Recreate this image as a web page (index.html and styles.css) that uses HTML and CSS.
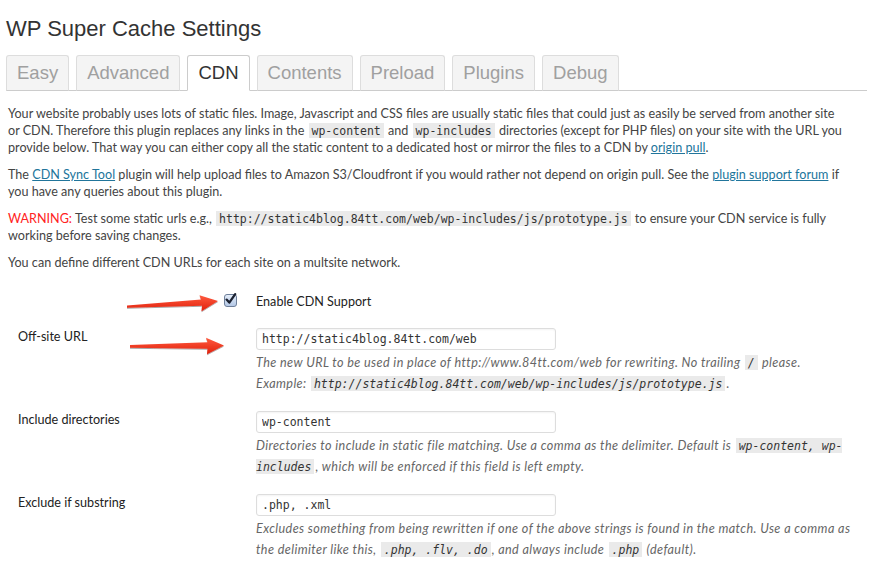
FILE: index.html
```html
<!DOCTYPE html>
<html lang="en">
<head>
  <meta charset="UTF-8" />
  <title>WP Super Cache Settings</title>
  <link rel="stylesheet" href="styles.css">
</head>
<body>

  <div class="wrap">
    <h2 class="page-title">WP Super Cache Settings</h2>

    <nav class="tabs">
      <a class="tab" href="#">Easy</a>
      <a class="tab" href="#">Advanced</a>
      <a class="tab active" href="#">CDN</a>
      <a class="tab" href="#">Contents</a>
      <a class="tab" href="#">Preload</a>
      <a class="tab" href="#">Plugins</a>
      <a class="tab" href="#">Debug</a>
    </nav>

    <p class="intro">Your website probably uses lots of static files. Image, Javascript and CSS files are usually static files that could just as easily be served from another site or CDN. Therefore this plugin replaces any links in the <code>wp-content</code> and <code>wp-includes</code> directories (except for PHP files) on your site with the URL you provide below. That way you can either copy all the static content to a dedicated host or mirror the files to a CDN by <a href="#">origin pull</a>.</p>

    <p class="intro">The <a href="#">CDN Sync Tool</a> plugin will help upload files to Amazon S3/Cloudfront if you would rather not depend on origin pull. See the <a href="#">plugin support forum</a> if you have any queries about this plugin.</p>

    <p class="intro"><span class="warning">WARNING:</span> Test some static urls e.g., <code>http://static4blog.84tt.com/web/wp-includes/js/prototype.js</code> to ensure your CDN service is fully working before saving changes.</p>

    <p class="intro">You can define different CDN URLs for each site on a multsite network.</p>

    <table class="form-table">
      <tr class="check-row">
        <td class="check-cell">
          <span class="checkbox">
            <svg width="13" height="13" viewBox="0 0 13 13"><path d="M2.6 6.6 L5.3 9.6 L11.2 1.2" fill="none" stroke="#1b2130" stroke-width="2.3" stroke-linecap="round" stroke-linejoin="round"/></svg>
          </span>
        </td>
        <td class="check-label">Enable CDN Support</td>
      </tr>
      <tr>
        <th>Off-site URL</th>
        <td>
          <input class="text-input" type="text" value="http://static4blog.84tt.com/web">
          <p class="description">The new URL to be used in place of http://www.84tt.com/web for rewriting. No trailing <code>/</code> please.<br>Example: <code>http://static4blog.84tt.com/web/wp-includes/js/prototype.js</code>.</p>
        </td>
      </tr>
      <tr>
        <th>Include directories</th>
        <td>
          <input class="text-input" type="text" value="wp-content">
          <p class="description">Directories to include in static file matching. Use a comma as the delimiter. Default is <code>wp-content, wp-includes</code>, which will be enforced if this field is left empty.</p>
        </td>
      </tr>
      <tr>
        <th>Exclude if substring</th>
        <td>
          <input class="text-input" type="text" value=".php, .xml">
          <p class="description">Excludes something from being rewritten if one of the above strings is found in the match. Use a comma as the delimiter like this, <code>.php, .flv, .do</code>, and always include <code>.php</code> (default).</p>
        </td>
      </tr>
    </table>

    <!-- red arrows drawn over the screenshot -->
    <svg class="arrows" width="110" height="70" viewBox="120 290 110 70">
      <defs>
        <linearGradient id="red" x1="0" y1="0" x2="0" y2="1">
          <stop offset="0" stop-color="#ff5b3f"/>
          <stop offset="1" stop-color="#e01f0c"/>
        </linearGradient>
        <filter id="shade" x="-10%" y="-50%" width="120%" height="200%">
          <feDropShadow dx="0" dy="1" stdDeviation="0.6" flood-color="#000" flood-opacity="0.35"/>
        </filter>
      </defs>
      <g fill="url(#red)" filter="url(#shade)">
        <polygon points="127,305.4 201,299.4 199.5,295.2 218,301 201.5,311.2 202,305.8 127,307.8"/>
        <polygon points="130,345 207.5,342.2 206,337.8 224,345.6 207,354.2 207.5,348.8 130,347.8"/>
      </g>
    </svg>
  </div>

</body>
</html>
```

FILE: styles.css
```css
body {
  margin: 0;
  background-color: #fff;
  color: #444;
  font-family: 'Century Gothic', Lato, 'DejaVu Sans', sans-serif;
  font-size: 12.6px;
}

.wrap {
  position: relative;
  padding: 0 3px 0 6px;
}

.page-title {
  margin: 0;
  padding: 15px 0 12px;
  font-family: 'Liberation Sans', Arial, sans-serif;
  font-size: 22px;
  font-weight: normal;
  color: #333;
  line-height: 28px;
}

.tabs {
  display: flex;
  gap: 7px;
  border-bottom: 1px solid #ccc;
}

.tab {
  display: block;
  margin-bottom: -1px;
  padding: 0 10px;
  height: 34px;
  line-height: 34px;
  border: 1px solid #ddd;
  border-bottom-color: #ccc;
  border-radius: 3px 3px 0 0;
  background-color: #f4f4f4;
  color: #a0a0a0;
  font-family: 'Liberation Sans', Arial, sans-serif;
  font-size: 18.5px;
  text-decoration: none;
}

.tab.active {
  background-color: #fff;
  border-color: #ccc;
  border-bottom-color: #fff;
  color: #333;
}

.intro {
  max-width: 840px;
  margin: 0 0 10px;
  padding-left: 2px;
  line-height: 17px;
}

.tabs + .intro {
  margin-top: 14px;
}

a {
  color: #21759b;
  text-decoration: underline;
}

.warning {
  color: #f22;
}

code {
  padding: 1px 3px 0;
  margin: 0 1px;
  background-color: #eaeaea;
  font-family: 'DejaVu Sans Mono', monospace;
  font-size: 11.5px;
  line-height: 1;
  color: #333;
}

.form-table {
  border-collapse: collapse;
  margin-top: 22px;
}

.form-table th,
.form-table td {
  vertical-align: top;
  padding: 0 10px;
}

.form-table th {
  width: 218px;
  padding: 1px 10px 0 12px;
  text-align: left;
  font-weight: normal;
  color: #222;
}

.check-row td {
  padding-bottom: 18px;
}

.check-cell {
  text-align: right;
}

.check-label {
  color: #222;
  line-height: 17px;
}

.checkbox {
  display: inline-block;
  box-sizing: border-box;
  width: 13px;
  height: 13px;
  margin-right: -1px;
  border: 1px solid #6e7f99;
  border-radius: 3px;
  background: linear-gradient(#e4edf9, #b4c8e6);
  vertical-align: -2px;
}

.checkbox svg {
  display: block;
  margin: -2px 0 0 -1px;
}

.text-input {
  box-sizing: border-box;
  width: 300px;
  height: 22px;
  margin: 0;
  padding: 0 5px;
  border: 1px solid #ddd;
  border-radius: 3px;
  box-shadow: inset 0 1px 2px rgba(0, 0, 0, 0.05);
  font-family: 'DejaVu Sans Mono', monospace;
  font-size: 11.5px;
  color: #333;
}

.description {
  width: 595px;
  margin: 2px 0 17px;
  line-height: 21px;
  font-style: italic;
  letter-spacing: 0.4px;
  color: #666;
}

.description code {
  font-style: italic;
  letter-spacing: 0;
}

.arrows {
  position: absolute;
  left: 120px;
  top: 290px;
  pointer-events: none;
}
```
